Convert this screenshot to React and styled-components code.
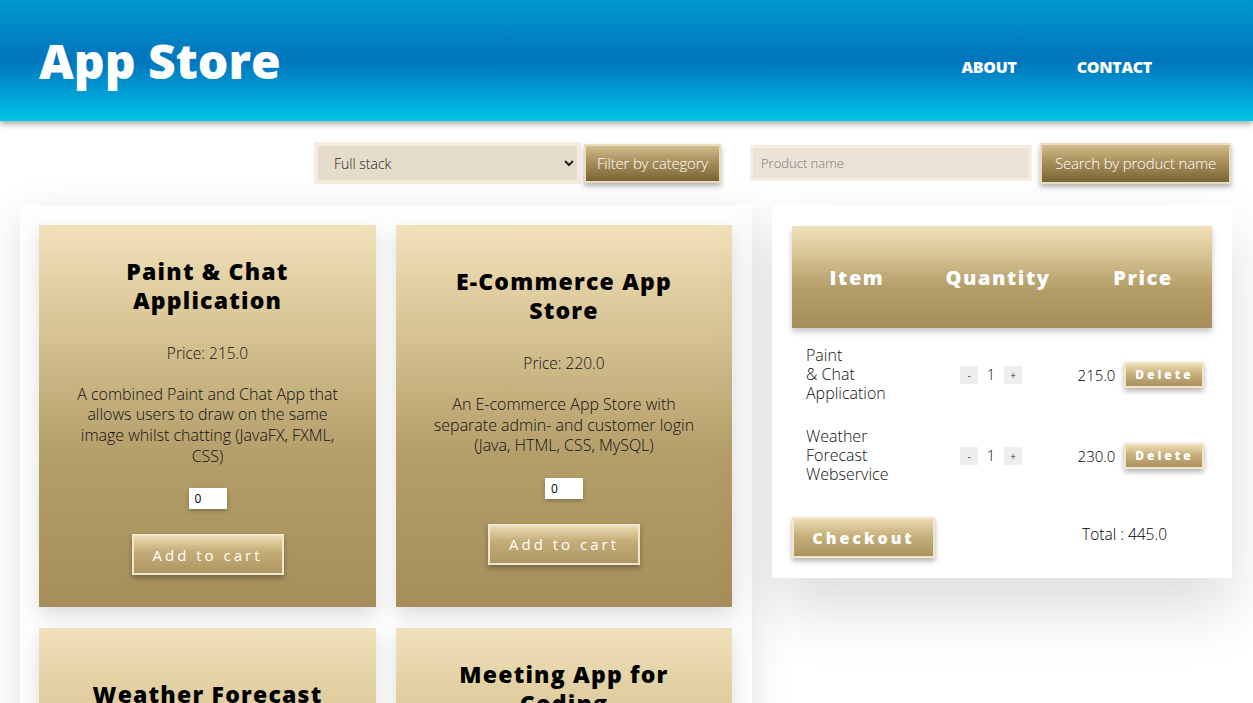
import React from "react";
import styled, { createGlobalStyle } from "styled-components";

const GlobalStyle = createGlobalStyle`
  html, body {
    margin: 0;
    padding: 0;
    background: #ffffff;
    overflow: hidden;
    font-family: "Open Sans", "Liberation Sans", sans-serif;
  }
`;

const gold = "linear-gradient(to bottom, #f1e1bb 0%, #d7c393 28%, #b49e6a 60%, #a58e5b 100%)";
const darkGold = "linear-gradient(to bottom, #d2bd8c 0%, #a88f5c 45%, #7a6536 100%)";

const Header = styled.header`
  height: 121px;
  display: flex;
  align-items: center;
  justify-content: space-between;
  padding: 0 101px 0 39px;
  background: linear-gradient(to bottom, #0199cd 0%, #0181c3 32%, #0075bd 50%, #009fd6 78%, #00c6e6 100%);
  box-shadow: 0 3px 6px rgba(0, 0, 0, 0.35);
  position: relative;
  z-index: 2;
`;

const Logo = styled.h1`
  margin: 0;
  color: #fff;
  font-size: 48px;
  font-weight: 800;
  letter-spacing: 0;
`;

const Nav = styled.nav`
  display: flex;
  gap: 60px;
  padding-top: 12px;
`;

const NavLink = styled.a`
  color: #fff;
  font-size: 16px;
  font-weight: 800;
  text-decoration: none;
  text-transform: uppercase;
  letter-spacing: -0.3px;
`;

const Toolbar = styled.div`
  display: flex;
  justify-content: flex-end;
  align-items: center;
  gap: 29px;
  padding: 21px 22px 0 0;
`;

const Group = styled.div`
  display: flex;
  align-items: center;
  gap: ${(p) => p.gap || 3}px;
`;

const SelectFrame = styled.div`
  width: 259px;
  height: 34px;
  border: 4px solid #f6ecdf;
  background: #e6dccb;
  display: flex;
`;

const Select = styled.select`
  flex: 1;
  border: none;
  background: transparent;
  font-family: inherit;
  font-size: 14px;
  font-weight: 300;
  color: #222;
  padding: 0 6px 0 12px;
  outline: none;
`;

const DarkButton = styled.button`
  width: ${(p) => p.w}px;
  height: ${(p) => p.h || 39}px;
  padding: 0;
  border: 2px solid #eadcbc;
  background: ${darkGold};
  color: #fff;
  font-family: inherit;
  font-size: 15px;
  font-weight: 300;
  letter-spacing: -0.2px;
  box-shadow: 0 3px 5px rgba(0, 0, 0, 0.3);
  cursor: pointer;
`;

const SearchInput = styled.input`
  width: 268px;
  height: 30px;
  border: 3px solid #f6eee2;
  background: #ece3d6;
  padding: 0 0 0 8px;
  font-family: inherit;
  font-size: 13px;
  font-weight: 300;
  color: #333;
  outline: none;
  &::placeholder {
    color: #777;
  }
`;

const Main = styled.main`
  display: flex;
  align-items: flex-start;
  gap: 20px;
  padding: 21px 21px 0 20px;
`;

const ProductPanel = styled.section`
  width: 693px;
  padding: 20px 20px 20px 19px;
  background: #fdfdfd;
  box-shadow: 0 10px 40px rgba(0, 0, 0, 0.12);
  display: grid;
  grid-template-columns: 337px 336px;
  column-gap: 20px;
  row-gap: 21px;
`;

const Card = styled.article`
  height: 382px;
  box-sizing: border-box;
  padding: 0 34px;
  background: ${gold};
  box-shadow: 0 8px 18px rgba(0, 0, 0, 0.13);
  display: flex;
  flex-direction: column;
  align-items: center;
  justify-content: center;
  text-align: center;
  color: #111;
`;

const CardTitle = styled.h2`
  margin: 0 0 28px;
  font-size: 23px;
  line-height: 29px;
  font-weight: 800;
  letter-spacing: 1.2px;
  color: #000;
`;

const Price = styled.p`
  margin: 0 0 21px;
  font-size: 15.5px;
  font-weight: 300;
  line-height: 20px;
`;

const Description = styled.p`
  margin: 0 0 22px;
  font-size: 16px;
  font-weight: 300;
  line-height: 20.6px;
`;

const QtyInput = styled.input`
  width: 38px;
  height: 21px;
  box-sizing: border-box;
  border: none;
  padding: 0 6px;
  margin: 0 0 25px;
  font-family: inherit;
  font-size: 12px;
  box-shadow: 0 2px 4px rgba(0, 0, 0, 0.25);
`;

const AddButton = styled.button`
  width: 152px;
  height: 41px;
  border: 2px solid #f1e7d0;
  background: linear-gradient(to bottom, #ecdcb4 0%, #c5ae79 40%, #ae9663 100%);
  color: #fff;
  font-family: inherit;
  font-size: 15px;
  font-weight: 400;
  letter-spacing: 3px;
  box-shadow: 0 3px 5px rgba(0, 0, 0, 0.3);
  cursor: pointer;
`;

const CartPanel = styled.section`
  width: 420px;
  padding: 21px 20px 20px;
  background: #fff;
  box-shadow: 0 30px 60px rgba(0, 0, 0, 0.14);
`;

const Row = styled.div`
  display: grid;
  grid-template-columns: 130px 152px 138px;
  align-items: center;
`;

const HeadRow = styled(Row)`
  height: 102px;
  margin-bottom: 6px;
  background: ${gold};
  box-shadow: 0 4px 6px rgba(0, 0, 0, 0.22);
`;

const HeadCell = styled.div`
  text-align: center;
  color: #fff;
  font-size: 20px;
  font-weight: 800;
  letter-spacing: 1.6px;
`;

const ItemRow = styled(Row)`
  padding: 12px 0;
  min-height: 57px;
`;

const ItemName = styled.div`
  padding-left: 14px;
  font-size: 16px;
  font-weight: 300;
  line-height: 19px;
  color: #111;
`;

const QtyCell = styled.div`
  display: flex;
  justify-content: center;
  align-items: center;
  gap: 9px;
  padding-right: 14px;
  font-size: 14px;
  font-weight: 300;
`;

const StepButton = styled.button`
  width: 18px;
  height: 18px;
  padding: 0;
  border: none;
  background: #eeeeee;
  font-family: inherit;
  font-size: 10px;
  color: #333;
`;

const PriceCell = styled.div`
  display: flex;
  justify-content: center;
  align-items: center;
  gap: 9px;
  font-size: 15px;
  font-weight: 300;
  padding-right: 4px;
`;

const GoldButton = styled.button`
  width: ${(p) => p.w}px;
  height: ${(p) => p.h}px;
  padding: 0;
  border: 2px solid #f3e6c6;
  background: linear-gradient(to bottom, #ecdcb4 0%, #c7b07c 45%, #aa9260 100%);
  color: #fff;
  font-family: inherit;
  font-size: ${(p) => p.fs}px;
  font-weight: 800;
  letter-spacing: ${(p) => p.ls}px;
  box-shadow: 0 3px 5px rgba(0, 0, 0, 0.3);
  cursor: pointer;
`;

const CartFooter = styled.div`
  display: flex;
  align-items: center;
  justify-content: space-between;
  padding: 21px 45px 0 0;
`;

const Total = styled.span`
  font-size: 15.5px;
  font-weight: 300;
  margin-top: -8px;
`;

const products = [
  {
    title: "Paint & Chat Application",
    price: "215.0",
    text: "A combined Paint and Chat App that allows users to draw on the same image whilst chatting (JavaFX, FXML, CSS)",
  },
  {
    title: "E-Commerce App Store",
    price: "220.0",
    text: "An E-commerce App Store with separate admin- and customer login (Java, HTML, CSS, MySQL)",
  },
  {
    title: "Weather Forecast Webservice",
    price: "230.0",
    text: "A weather forecast REST webservice (Java, Spring)",
  },
  {
    title: "Meeting App for Coding",
    price: "250.0",
    text: "A meeting app where developers can book pair programming sessions and write code together (React, Node.js, Socket.io)",
  },
];

const cart = [
  { lines: ["Paint", "& Chat", "Application"], qty: 1, price: "215.0" },
  { lines: ["Weather", "Forecast", "Webservice"], qty: 1, price: "230.0" },
];

export default function App() {
  return (
    <>
      <GlobalStyle />
      <Header>
        <Logo>App Store</Logo>
        <Nav>
          <NavLink href="#about">About</NavLink>
          <NavLink href="#contact">Contact</NavLink>
        </Nav>
      </Header>

      <Toolbar>
        <Group>
          <SelectFrame>
            <Select defaultValue="full">
              <option value="full">Full stack</option>
              <option value="front">Frontend</option>
              <option value="back">Backend</option>
            </Select>
          </SelectFrame>
          <DarkButton w={137}>Filter by category</DarkButton>
        </Group>
        <Group gap={8}>
          <SearchInput placeholder="Product name" />
          <DarkButton w={191} h={41}>
            Search by product name
          </DarkButton>
        </Group>
      </Toolbar>

      <Main>
        <ProductPanel>
          {products.map((p) => (
            <Card key={p.title}>
              <CardTitle>{p.title}</CardTitle>
              <Price>Price: {p.price}</Price>
              <Description>{p.text}</Description>
              <QtyInput defaultValue="0" />
              <AddButton>Add to cart</AddButton>
            </Card>
          ))}
        </ProductPanel>

        <CartPanel>
          <HeadRow>
            <HeadCell>Item</HeadCell>
            <HeadCell>Quantity</HeadCell>
            <HeadCell>Price</HeadCell>
          </HeadRow>
          {cart.map((c) => (
            <ItemRow key={c.price}>
              <ItemName>
                {c.lines.map((l) => (
                  <div key={l}>{l}</div>
                ))}
              </ItemName>
              <QtyCell>
                <StepButton>-</StepButton>
                <span>{c.qty}</span>
                <StepButton>+</StepButton>
              </QtyCell>
              <PriceCell>
                <span>{c.price}</span>
                <GoldButton w={80} h={26} fs={12} ls={3}>
                  Delete
                </GoldButton>
              </PriceCell>
            </ItemRow>
          ))}
          <CartFooter>
            <GoldButton w={143} h={41} fs={16} ls={3}>
              Checkout
            </GoldButton>
            <Total>Total : 445.0</Total>
          </CartFooter>
        </CartPanel>
      </Main>
    </>
  );
}
